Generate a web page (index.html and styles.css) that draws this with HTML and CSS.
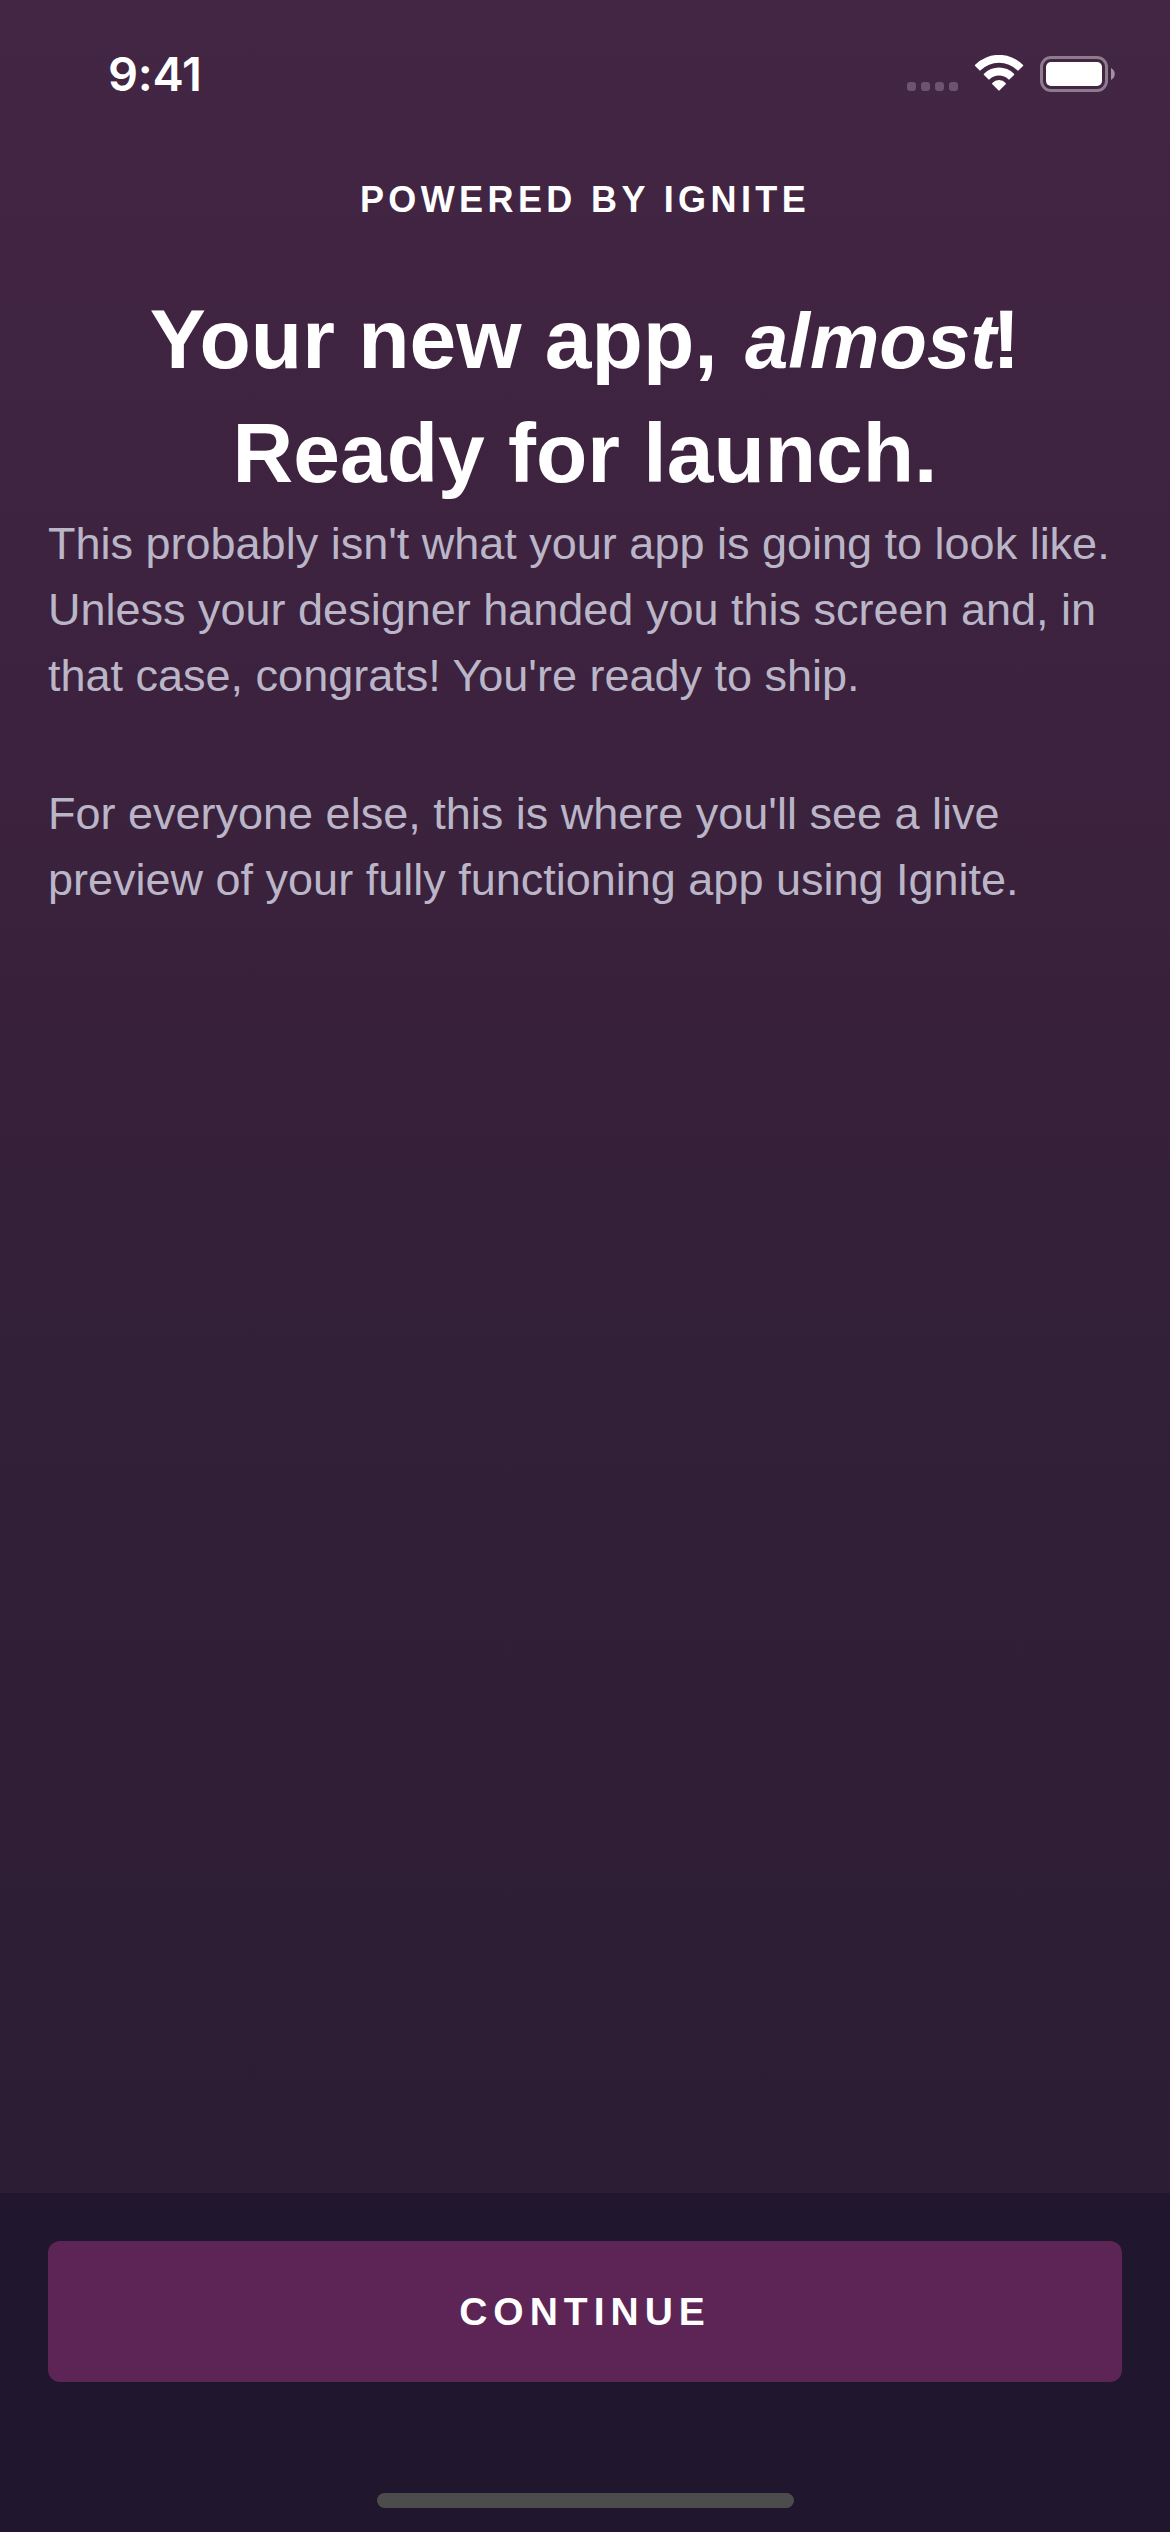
FILE: index.html
```html
<!DOCTYPE html>
<html lang="en">
<head>
<meta charset="utf-8">
<title>Ignite</title>
<link rel="stylesheet" href="styles.css">
</head>
<body>
<div class="screen">
  <div class="status">
    <span class="time">9:41</span>
    <div class="indicators">
      <div class="signal"><i></i><i></i><i></i><i></i></div>
      <svg class="wifi" viewBox="0 0 150 108" width="50" height="36">
        <path d="M3.500 33Q1 31 3.500 29A101.500 101.500 0 0 1 146.500 29Q149 31 147 33L134 46Q132 48 130 46A78.500 78.500 0 0 0 20 46Q18 48 16 46Z"/>
        <path d="M30 60Q28 58 30 56A63.500 63.500 0 0 1 120 56Q122 58 120 60L107 73Q105 75 103 73A40.500 40.500 0 0 0 47 73Q45 75 43 73Z"/>
        <path d="M55 88Q53 86 55 84A26.500 26.500 0 0 1 95 84Q97 86 95 88L77 106Q75 108 73 106Z"/>
      </svg>
      <svg class="battery" viewBox="0 0 76 36" width="76" height="36">
        <rect class="shell" x="1.500" y="1.500" width="65" height="33" rx="9.500"/>
        <rect x="6" y="6" width="56" height="24" rx="5"/>
        <path class="nub" d="M71 12C76 14.500 76 21.500 71 24Z"/>
      </svg>
    </div>
  </div>
  <main class="content">
    <div class="header">POWERED BY IGNITE</div>
    <h1 class="title">Your new app, <em>almost</em>!<br>Ready for launch.</h1>
    <p class="copy">This probably isn't what your app is going to look like. Unless your designer handed you this screen and, in that case, congrats! You're ready to ship.</p>
    <p class="copy">For everyone else, this is where you'll see a live preview of your fully functioning app using Ignite.</p>
  </main>
  <footer class="footer">
    <button class="continue">CONTINUE</button>
    <div class="home-bar"></div>
  </footer>
</div>
</body>
</html>
```
FILE: styles.css
```css
* { box-sizing: border-box; }
body { margin: 0; font-family: "Liberation Sans", Arial, sans-serif; }
.screen {
  width: 1170px;
  height: 2532px;
  display: flex;
  flex-direction: column;
  overflow: hidden;
  color: #fff;
  background: linear-gradient(#432644 0, #3a213c 900px, #321f38 1350px, #2c1d34 2193px);
}
.status {
  height: 141px;
  flex: none;
  display: flex;
  justify-content: space-between;
  align-items: flex-start;
  padding: 55px 54px 0 108px;
}
.time {
  font: 600 47px/38px Inter, sans-serif;
  letter-spacing: -0.3px;
}
.indicators { display: flex; }
.signal { display: flex; gap: 5px; padding-top: 27px; margin-right: 16px; }
.signal i { width: 9px; height: 9px; border-radius: 3px; background: rgba(255, 255, 255, .22); }
svg { display: block; fill: #fff; }
.battery { margin: 1px 0 0 16px; }
.shell { fill: none; stroke: #fff; stroke-opacity: .4; stroke-width: 3; }
.nub { fill-opacity: .5; }
.content { flex: 1; padding: 38px 48px 0; }
.header {
  text-align: center;
  font-weight: 700;
  font-size: 36px;
  line-height: 42px;
  letter-spacing: 4.4px;
}
.title {
  margin: 61px 0 1px;
  text-align: center;
  font-size: 84px;
  line-height: 114px;
}
.title em { font-size: 78px; line-height: 0; margin: 0 -4px 0 4px; }
.copy {
  margin: 0 0 72px;
  font-size: 45px;
  line-height: 66px;
  color: #bab6c8;
}
.footer {
  height: 339px;
  flex: none;
  display: flex;
  flex-direction: column;
  justify-content: space-between;
  align-items: center;
  padding: 48px 48px 24px;
  background: #20162d;
}
.continue {
  width: 100%;
  height: 141px;
  border: 0;
  border-radius: 12px;
  padding: 0;
  background: #5d2555;
  color: #fff;
  font: 700 39px/45px "Liberation Sans", Arial, sans-serif;
  letter-spacing: 6px;
}
.home-bar { width: 417px; height: 15px; border-radius: 8px; background: #4d4c4c; }
```
